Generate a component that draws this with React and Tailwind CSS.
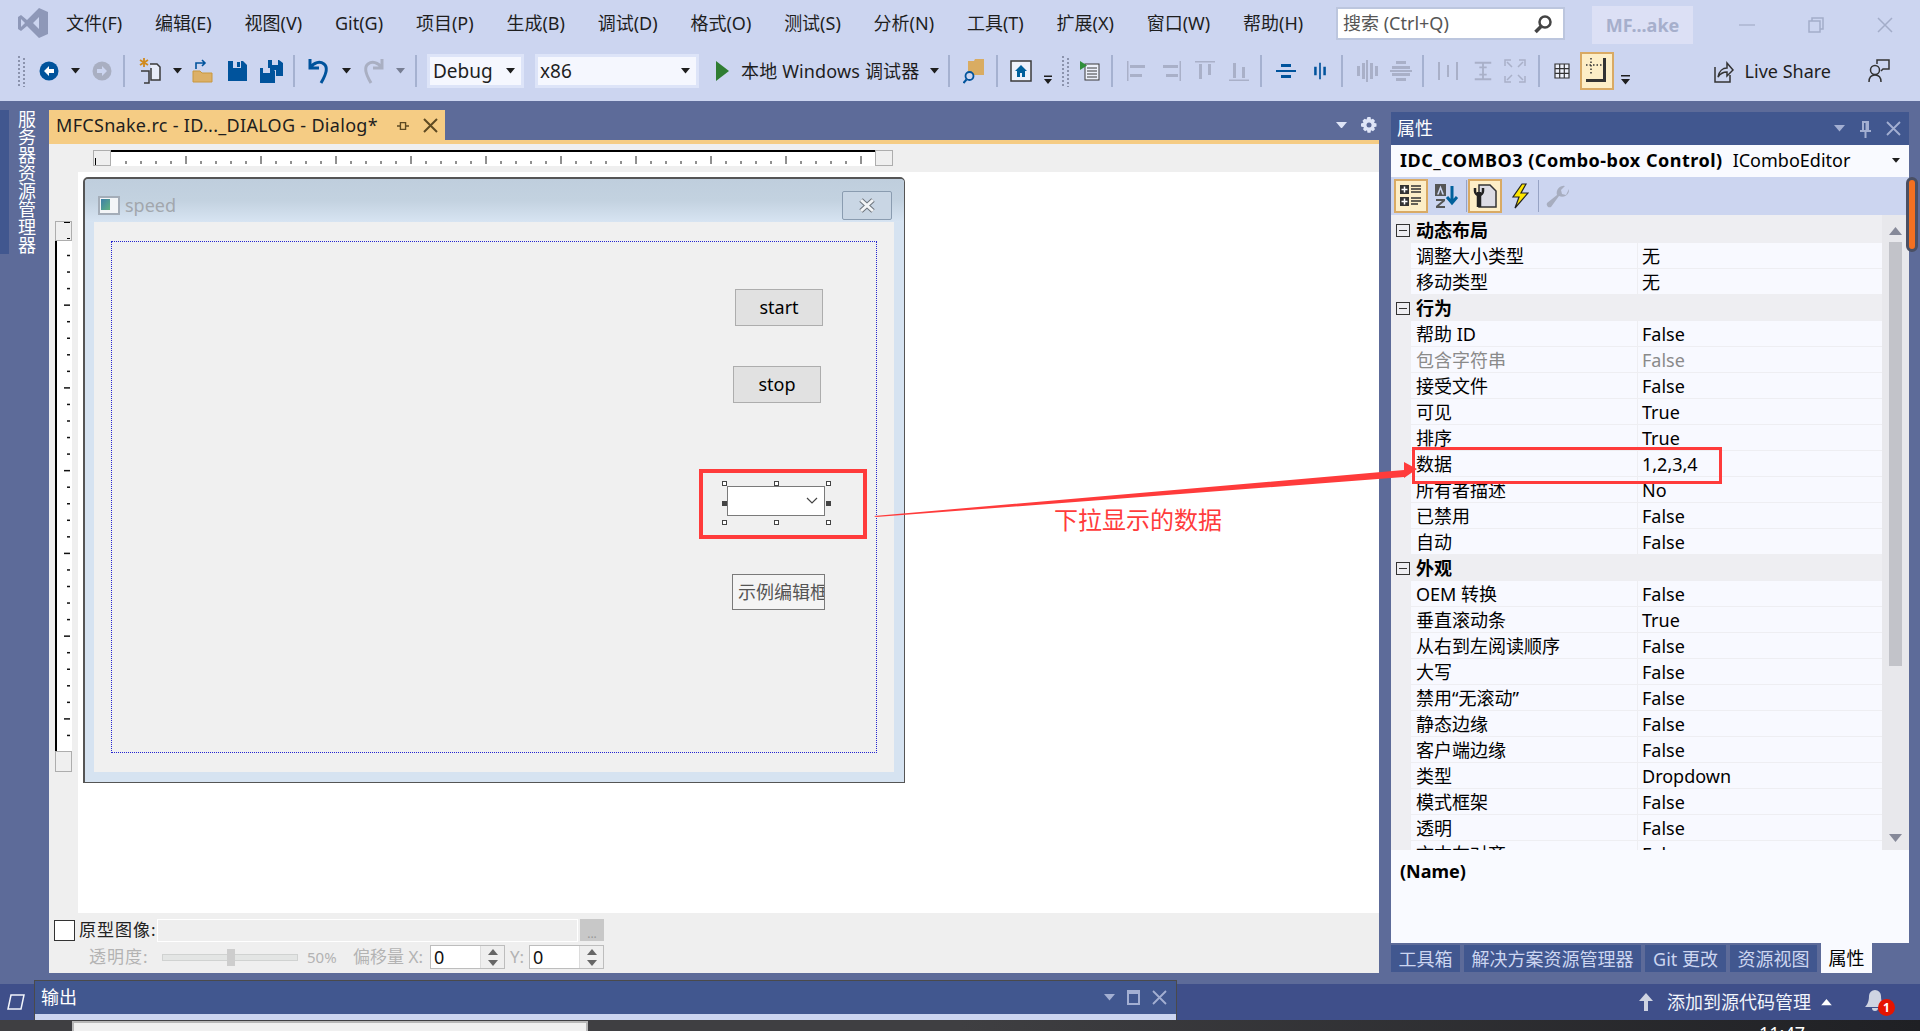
import React from "react";

const menus = ["文件(F)", "编辑(E)", "视图(V)", "Git(G)", "项目(P)", "生成(B)", "调试(D)", "格式(O)", "测试(S)", "分析(N)", "工具(T)", "扩展(X)", "窗口(W)", "帮助(H)"];

const rows = [
  { group: "动态布局" },
  { name: "调整大小类型", value: "无" },
  { name: "移动类型", value: "无" },
  { group: "行为" },
  { name: "帮助 ID", value: "False" },
  { name: "包含字符串", value: "False", muted: true },
  { name: "接受文件", value: "False" },
  { name: "可见", value: "True" },
  { name: "排序", value: "True" },
  { name: "数据", value: "1,2,3,4" },
  { name: "所有者描述", value: "No" },
  { name: "已禁用", value: "False" },
  { name: "自动", value: "False" },
  { group: "外观" },
  { name: "OEM 转换", value: "False" },
  { name: "垂直滚动条", value: "True" },
  { name: "从右到左阅读顺序", value: "False" },
  { name: "大写", value: "False" },
  { name: "禁用“无滚动”", value: "False" },
  { name: "静态边缘", value: "False" },
  { name: "客户端边缘", value: "False" },
  { name: "类型", value: "Dropdown" },
  { name: "模式框架", value: "False" },
  { name: "透明", value: "False" },
  { name: "文本左对齐", value: "False" },
];

const hTicks = Array.from({ length: 52 }, (_, i) => i);
const vTicks = Array.from({ length: 31 }, (_, i) => i);

function Caret({ color = "#1e1e1e", size = 9 }) {
  return (
    <svg width={size} height={size * 0.6} viewBox="0 0 10 6" className="shrink-0">
      <path d="M0 0h10L5 6z" fill={color} />
    </svg>
  );
}

function SmallDrop() {
  return (
    <svg width="9" height="10" viewBox="0 0 9 10" className="mt-[18px]">
      <path d="M0 0h9v1.5H0zM0 4h9L4.5 9.5z" fill="#1e1e1e" />
    </svg>
  );
}

function Sep() {
  return <div className="w-[2px] h-[32px] bg-[#a5b1d0]" />;
}

function Grip() {
  return (
    <svg width="8" height="32" viewBox="0 0 8 32">
      {[1, 5, 9, 13, 17, 21, 25, 29].map((y) => (
        <g key={y} fill="#8b93ad">
          <rect x="0" y={y} width="2" height="2" />
          <rect x="5" y={y + 2} width="2" height="2" />
        </g>
      ))}
    </svg>
  );
}

function Slot({ className, children }) {
  return <div className={`flex items-center justify-center h-full shrink-0 ${className}`}>{children}</div>;
}

function AlignIcon({ d, color = "#a9b0c8" }) {
  return (
    <svg width="24" height="24" viewBox="0 0 24 24">
      <path d={d} fill={color} />
    </svg>
  );
}

function Toolbar() {
  return (
    <div className="h-[55px] flex items-center pl-[14px] bg-[#ccd5f0] pb-[5px]">
      <Slot className="w-[16px]"><Grip /></Slot>
      <Slot className="w-[38px]">
        <svg width="20" height="20" viewBox="0 0 20 20">
          <circle cx="10" cy="10" r="9.5" fill="#00539c" />
          <path d="M10 5l-5 5 5 5v-3h5V8h-5z" fill="#fff" />
        </svg>
      </Slot>
      <Slot className="w-[14px]"><Caret /></Slot>
      <Slot className="w-[40px]">
        <svg width="20" height="20" viewBox="0 0 20 20">
          <circle cx="10" cy="10" r="9.5" fill="#a9afc2" />
          <path d="M10 5l5 5-5 5v-3H5V8h5z" fill="#ccd5f0" />
        </svg>
      </Slot>
      <Slot className="w-[4px]"><Sep /></Slot>
      <Slot className="w-[48px]">
        <svg width="24" height="26" viewBox="0 0 24 26">
          <path d="M6 0v9M2 2l8 5M10 2L2 7" stroke="#d08a1d" strokeWidth="1.800" />
          <path d="M12 6h7l3 3v13h-9V10" fill="#e8ecf8" stroke="#3a3a3a" strokeWidth="1.500" />
          <path d="M3 13h8v12H6" fill="none" stroke="#3a3a3a" strokeWidth="1.500" />
        </svg>
      </Slot>
      <Slot className="w-[6px]"><Caret /></Slot>
      <Slot className="w-[46px]">
        <svg width="22" height="24" viewBox="0 0 22 24">
          <path d="M1 12h7l2 2h10v9H1z" fill="#dcb067" stroke="#c9983f" />
          <path d="M4 10V4h9M10 1l3 3-3 3" fill="none" stroke="#00539c" strokeWidth="1.600" />
        </svg>
      </Slot>
      <Slot className="w-[24px]">
        <svg width="20" height="22" viewBox="0 0 20 22">
          <path d="M0 1h15l4 4v16H0z" fill="#00539c" />
          <path d="M5 1h8v7H5z" fill="#ccd5f0" />
          <path d="M9 2h3v5H9z" fill="#00539c" />
        </svg>
      </Slot>
      <Slot className="w-[42px]">
        <svg width="23" height="24" viewBox="0 0 23 24">
          <path d="M8 1h11l4 3v13h-7v-6H8z" fill="#00539c" />
          <path d="M12 1h6v5h-6z" fill="#ccd5f0" />
          <path d="M0 9h12l3 3v12H0z" fill="#00539c" />
          <path d="M3 9h7v5H3z" fill="#ccd5f0" />
        </svg>
      </Slot>
      <Slot className="w-[4px]"><Sep /></Slot>
      <Slot className="w-[48px]">
        <svg width="26" height="28" viewBox="0 0 26 28">
          <path d="M3 2v9h9M3 11c4-6 10-7 14-4 4 3 3 9-3 19" fill="none" stroke="#00539c" strokeWidth="3" />
        </svg>
      </Slot>
      <Slot className="w-[4px]"><Caret /></Slot>
      <Slot className="w-[48px]">
        <svg width="26" height="28" viewBox="0 0 26 28">
          <path d="M23 2v9h-9M23 11c-4-6-10-7-14-4-4 3-3 9 3 19" fill="none" stroke="#a9afc2" strokeWidth="3" />
        </svg>
      </Slot>
      <Slot className="w-[8px]"><Caret color="#777e93" /></Slot>
      <Slot className="w-[23px]"><Sep /></Slot>

      <div className="w-[97px] h-[34px] border-[3px] border-[#dde4f8] bg-[#f5f7fe] flex items-center justify-between pl-[3px] pr-[6px] text-[#1e1e1e] text-[19px] shrink-0">
        <span>Debug</span>
        <Caret />
      </div>
      <div className="ml-[11px] w-[164px] h-[34px] border-[3px] border-[#dde4f8] bg-[#f5f7fe] flex items-center justify-between pl-[2px] pr-[6px] text-[#1e1e1e] text-[19px] shrink-0">
        <span>x86</span>
        <Caret />
      </div>

      <svg width="13" height="20" viewBox="0 0 13 20" className="ml-[17px] shrink-0">
        <path d="M0 0l13 10L0 20z" fill="#2f7d32" />
      </svg>
      <span className="ml-[12px] w-[180px] text-[18px] tracking-[0.15px] text-[#1e1e1e] whitespace-nowrap shrink-0">本地 Windows 调试器</span>
      <Slot className="w-[26px]"><Caret /></Slot>
      <Slot className="w-[4px]"><Sep /></Slot>
      <Slot className="w-[45px]">
        <svg width="22" height="26" viewBox="0 0 22 26">
          <path d="M5 3h6l1-2h9v16H5z" fill="#d9ac62" />
          <circle cx="6.500" cy="18" r="4" fill="#ccd5f0" stroke="#00539c" strokeWidth="1.800" />
          <path d="M3.500 21.500L0.500 25" stroke="#00539c" strokeWidth="2" />
        </svg>
      </Slot>
      <Slot className="w-[2px]"><Sep /></Slot>
      <Slot className="w-[46px]">
        <svg width="22" height="22" viewBox="0 0 22 22">
          <rect x="1" y="1" width="20" height="20" fill="#edf1fb" stroke="#3a3a3a" strokeWidth="1.500" />
          <path d="M11 5l-6 6h2v6h3v-4h2v4h3v-6h2z" fill="#00609c" />
        </svg>
      </Slot>
      <Slot className="w-[8px]"><SmallDrop /></Slot>
      <Slot className="w-[28px]"><Grip /></Slot>
      <Slot className="w-[20px]">
        <svg width="20" height="22" viewBox="0 0 20 22">
          <rect x="5" y="4" width="14" height="16" fill="#edf1fb" stroke="#3a3a3a" />
          <path d="M7 8h10M7 11h10M7 14h10M7 17h10" stroke="#3a3a3a" />
          <path d="M0 1l7 4.500L0 10z" fill="#2f8f3a" />
        </svg>
      </Slot>
      <Slot className="w-[24px]"><Sep /></Slot>
      <Slot className="w-[26px]"><AlignIcon d="M2 2h1.500v20H2zM5 6h15v3H5zM5 15h12v3H5z" /></Slot>
      <Slot className="w-[42px]"><AlignIcon d="M20.500 2H22v20h-1.500zM4 6h15v3H4zM7 15h12v3H7z" /></Slot>
      <Slot className="w-[26px]"><AlignIcon d="M2 2h20v1.500H2zM6 5h3v15H6zM15 5h3v11h-3z" /></Slot>
      <Slot className="w-[42px]"><AlignIcon d="M2 20.500h20V22H2zM6 4h3v15H6zM15 8h3v11h-3z" /></Slot>
      <Slot className="w-[2px]"><Sep /></Slot>
      <Slot className="w-[48px]"><AlignIcon color="#00539c" d="M2 11h20v2H2zM7 5h10v3H7zM7 16h10v3H7z" /></Slot>
      <Slot className="w-[20px]"><AlignIcon color="#00539c" d="M11 2h2v20h-2zM5 7h3v10H5zM16 7h3v10h-3z" /></Slot>
      <Slot className="w-[24px]"><Sep /></Slot>
      <Slot className="w-[26px]"><AlignIcon d="M2 7h3v10H2zM7 4h3v16H7zM11 1h2v22h-2zM15 4h3v16h-3zM20 7h3v10h-3z" /></Slot>
      <Slot className="w-[42px]"><AlignIcon d="M7 2h10v3H7zM3 7h18v3H3zM1 11h22v2H1zM3 14h18v3H3zM7 19h10v3H7z" /></Slot>
      <Slot className="w-[2px]"><Sep /></Slot>
      <Slot className="w-[48px]"><AlignIcon d="M2 3h2v18H2zM20 3h2v18h-2zM11 6h2v12h-2zM8 9l8 6M16 9l-8 6" /></Slot>
      <Slot className="w-[22px]"><AlignIcon d="M3 2h18v2H3zM3 20h18v2H3zM11 4h2v16h-2zM8 7h8v2H8zM8 15h8v2H8z" /></Slot>
      <Slot className="w-[41px]">
        <svg width="22" height="24" viewBox="0 0 22 24" fill="none" stroke="#a9b0c8" strokeWidth="1.500">
          <path d="M1 7V1h6M21 7V1h-6M1 17v6h6M21 17v6h-6M3 3l5 5M19 3l-5 5M3 21l5-5M19 21l-5-5" />
        </svg>
      </Slot>
      <Slot className="w-[8px]"><Sep /></Slot>
      <Slot className="w-[37px]">
        <svg width="16" height="16" viewBox="0 0 16 16" fill="#eef1fb" stroke="#333" strokeWidth="1.200">
          <path d="M1 1h14v14H1zM5.700 1v14M10.300 1v14M1 5.700h14M1 10.300h14" />
        </svg>
      </Slot>
      <div className="w-[34px] h-[38px] bg-[#fdeec7] border-[2px] border-[#d9aa64] flex items-center justify-center shrink-0">
        <svg width="26" height="28" viewBox="0 0 26 28">
          <path d="M22 1v24H2v-3h17V1z" fill="#333" />
          <path d="M7 1v17M2 8h17" stroke="#333" strokeWidth="1.500" strokeDasharray="1.500 2" />
        </svg>
      </div>
      <Slot className="w-[22px]"><SmallDrop /></Slot>

      <div className="ml-auto flex items-center text-[18px] text-[#1e1e1e]">
        <svg width="20" height="24" viewBox="0 0 20 24" fill="none" stroke="#333" strokeWidth="1.500">
          <path d="M1 8v15h15v-7" />
          <path d="M4 18c1-6 5-9 9-9V4l6 7-6 6v-4c-4 0-7 2-9 5z" />
        </svg>
        <span className="ml-[11px]">Live Share</span>
        <svg width="22" height="26" viewBox="0 0 22 26" fill="none" stroke="#333" strokeWidth="1.500" className="ml-[37px] mr-[30px]">
          <circle cx="7" cy="12" r="4.500" />
          <path d="M1 24c0-5 2-7 6-7s6 2 6 7M9 6V2h12v9h-6l-2 2" />
        </svg>
      </div>
    </div>
  );
}

function MenuBar() {
  return (
    <div className="h-[46px] flex items-center bg-[#ccd5f0]">
      <svg width="32" height="32" viewBox="0 0 32 32" className="ml-[17px] shrink-0">
        <path d="M22 1l9 4v22l-9 4-12-12-6 5-3-2V10l3-2 6 5zM22 10l-6 6 6 6zM4 12v8l4-4z" fill="#8e98b8" />
      </svg>
      <nav className="ml-[17px] flex gap-[32.8px] text-[18px] text-[#1e1e1e] whitespace-nowrap">
        {menus.map((m) => <span key={m}>{m}</span>)}
      </nav>
      <div className="absolute left-[1336px] top-[7px] w-[229px] h-[33px] bg-white border-[2px] border-[#bcc6de] flex items-center justify-between pl-[5px] pr-[10px] text-[18px] text-[#555]">
        <span>搜索 (Ctrl+Q)</span>
        <svg width="20" height="20" viewBox="0 0 20 20" fill="none" stroke="#444" strokeWidth="2.500">
          <circle cx="12" cy="8" r="5.500" />
          <path d="M8 12.500L2.500 18" strokeWidth="3.500" />
        </svg>
      </div>
      <div className="absolute left-[1592px] top-[6px] w-[101px] h-[38px] bg-[#dce0f5] flex items-center justify-center text-[18px] font-bold text-[#a6afcc]">MF...ake</div>
      <svg width="16" height="16" viewBox="0 0 16 16" className="absolute left-[1739px] top-[17px]" stroke="#a3adc9" strokeWidth="1.200" fill="none">
        <path d="M0 8h16" />
      </svg>
      <svg width="16" height="16" viewBox="0 0 16 16" className="absolute left-[1808px] top-[17px]" stroke="#a3adc9" strokeWidth="1.500" fill="none">
        <path d="M1 4h11v11H1zM4 4V1h11v11h-3" />
      </svg>
      <svg width="16" height="16" viewBox="0 0 16 16" className="absolute left-[1877px] top-[17px]" stroke="#a3adc9" strokeWidth="1.500" fill="none">
        <path d="M1 1l14 14M15 1L1 15" />
      </svg>
    </div>
  );
}

function HRuler() {
  return (
    <div className="flex h-[15px] ml-[44px] shrink-0">
      <div className="w-[18px] h-[16px] bg-[#efefef] border border-[#adadad] flex items-end pl-[1px]">
        <div className="w-[1px] h-[7px] bg-black" />
      </div>
      <svg width="764" height="16" viewBox="0 0 764 16" className="bg-white shrink-0">
        <path d="M0 1h764" stroke="#000" strokeWidth="2" />
        {hTicks.map((i) => (
          <path key={i} d={`M${i * 15 + 15} ${(i + 1) % 5 === 0 ? 6 : 11}V14`} stroke="#222" />
        ))}
      </svg>
      <div className="w-[18px] h-[16px] bg-[#efefef] border border-[#adadad]" />
    </div>
  );
}

function VRuler() {
  return (
    <div className="flex flex-col w-[17px] ml-[6px] mt-[49px] shrink-0">
      <div className="w-[17px] h-[20px] bg-[#efefef] border border-[#adadad] shrink-0 flex flex-col items-end justify-between pr-[1px]">
        <div className="w-[6px] h-[1px] bg-black" />
        <div className="w-[3px] h-[1px] bg-black mb-[1px]" />
      </div>
      <svg width="17" height="510" viewBox="0 0 17 510" className="bg-white shrink-0">
        <path d="M1 0v510" stroke="#000" strokeWidth="2" />
        {vTicks.map((i) => (
          <path key={i} d={`M${i % 5 === 3 ? 9 : 12} ${i * 16.55 + 14.5}H15`} stroke="#111" strokeWidth="1.500" />
        ))}
      </svg>
      <div className="w-[17px] h-[21px] bg-[#efefef] border border-[#adadad] shrink-0" />
    </div>
  );
}

function Handle({ className, solid }) {
  return <div className={`absolute w-[5px] h-[5px] border border-[#444] ${solid ? "bg-[#444]" : "bg-white"} ${className}`} />;
}

function DialogBox() {
  return (
    <div className="ml-[5px] mt-[5px] w-[822px] h-[606px] flex flex-col bg-[#d6e3f1] border border-[#555] border-t-[2px] border-l-[2px] rounded-t-[5px] shrink-0">
      <div className="h-[43px] shrink-0 flex items-center pt-[9px] relative bg-gradient-to-b from-[#bfcedd] via-[#c3d2e0] to-[#d7e4f2] rounded-t-[4px]">
        <div className="ml-[13px] w-[22px] h-[19px] bg-[#f3f5f7] border-[2px] border-[#a4adb8] flex">
          <div className="w-[9px] h-[11px] ml-[1px] mt-[1px] bg-gradient-to-br from-[#3f7ea7] to-[#61b27d]" />
        </div>
        <span className="ml-[5px] text-[18px] text-[#a2a7ad] leading-none">speed</span>
        <div className="absolute left-[757px] top-[12px] w-[50px] h-[29px] border border-[#8a9cb0] rounded-[2px] flex items-center justify-center bg-[#c9d6e4]">
          <svg width="18" height="17" viewBox="0 0 18 17">
            <path d="M3 3l12 11M15 3L3 14" stroke="#6d747c" strokeWidth="5" />
            <path d="M3 3l12 11M15 3L3 14" stroke="#f2f4f6" strokeWidth="3" />
          </svg>
        </div>
      </div>
      <div className="relative mx-[9px] w-[800px] h-[550px] bg-[#f0f0f0]">
        <div className="absolute left-[17px] top-[19px] w-[766px] h-[512px] border border-dotted border-[#2424d0]" />
        <div className="absolute left-[641px] top-[67px] w-[88px] h-[37px] bg-[#e1e1e1] border border-[#adadad] flex items-center justify-center text-[18px] text-black">start</div>
        <div className="absolute left-[639px] top-[144px] w-[88px] h-[37px] bg-[#e1e1e1] border border-[#adadad] flex items-center justify-center text-[18px] text-black">stop</div>

        <div className="absolute left-[633px] top-[264px] w-[98px] h-[30px] bg-white border border-[#7a7a7a] flex items-center justify-end pr-[6px]">
          <svg width="12" height="8" viewBox="0 0 12 8" fill="none" stroke="#444" strokeWidth="1.200">
            <path d="M1 1l5 5 5-5" />
          </svg>
        </div>
        <Handle className="left-[628px] top-[259px]" />
        <Handle className="left-[680px] top-[259px]" />
        <Handle className="left-[732px] top-[259px]" />
        <Handle className="left-[628px] top-[279px]" solid />
        <Handle className="left-[732px] top-[279px]" solid />
        <Handle className="left-[628px] top-[298px]" />
        <Handle className="left-[680px] top-[298px]" />
        <Handle className="left-[732px] top-[298px]" />

        <div className="absolute left-[638px] top-[352px] w-[93px] h-[36px] bg-[#f4f4f4] border border-[#7a7a7a] flex items-center pl-[5px] overflow-hidden text-[18px] text-[#555] whitespace-nowrap">示例编辑框</div>
      </div>
    </div>
  );
}

function Spin() {
  return (
    <div className="w-[24px] h-full flex flex-col bg-[#efefef] border-l border-[#dcdcdc] items-center justify-around">
      <span className="rotate-180 flex"><Caret color="#666" size={10} /></span>
      <span className="flex"><Caret color="#666" size={10} /></span>
    </div>
  );
}

function BottomPanel() {
  return (
    <div className="h-[60px] shrink-0 bg-[#efefef] pl-[5px] pt-[5px] flex flex-col gap-[3px] text-[17px]">
      <div className="flex items-center h-[24px]">
        <div className="w-[21px] h-[21px] bg-white border border-[#333]" />
        <span className="ml-[4px] w-[78px] tracking-[1px] text-[#222] whitespace-nowrap">原型图像:</span>
        <div className="w-[421px] h-[23px] bg-[#eeeeee] border border-white" />
        <div className="ml-[2px] w-[24px] h-[22px] bg-[#c8c8c8] text-[#999] text-[12px] flex items-end justify-center leading-[14px]">...</div>
      </div>
      <div className="flex items-center h-[24px] text-[#b3b3b3] whitespace-nowrap">
        <span className="ml-[35px] w-[73px] tracking-[1px]">透明度:</span>
        <div className="relative w-[136px] h-[7px] bg-[#e3e5e4] border border-[#d0d2d1]">
          <div className="absolute left-[64px] -top-[6px] w-[8px] h-[17px] bg-[#cdcdcd]" />
        </div>
        <span className="ml-[9px] w-[46px] text-[15px]">50%</span>
        <span className="w-[77px]">偏移量 X:</span>
        <div className="w-[75px] h-[24px] bg-white border border-[#bdbdbd] flex items-center justify-between text-[18px] text-[#111] pl-[3px]">
          0
          <Spin />
        </div>
        <span className="ml-[5px] w-[19px]">Y:</span>
        <div className="w-[75px] h-[24px] bg-white border border-[#bdbdbd] flex items-center justify-between text-[18px] text-[#111] pl-[3px]">
          0
          <Spin />
        </div>
      </div>
    </div>
  );
}

function PropsPanel() {
  return (
    <div className="w-[518px] mt-[11px] h-[861px] flex flex-col shrink-0 text-[18px] relative">
      <div className="h-[33px] bg-[#41578f] flex items-center pl-[6px] pr-[8px] text-white shrink-0">
        <span>属性</span>
        <div className="ml-auto flex items-center gap-[15px]">
          <Caret color="#a3afd2" size={11} />
          <svg width="11" height="18" viewBox="0 0 11 18" fill="#a3afd2">
            <path d="M2 1h7v9h2v2H6.500v6h-2v-6H0v-2h2zM4 3v7h1.500V3z" />
          </svg>
          <svg width="15" height="15" viewBox="0 0 15 15" stroke="#a3afd2" strokeWidth="1.800" fill="none">
            <path d="M1 1l13 13M14 1L1 14" />
          </svg>
        </div>
      </div>
      <div className="h-[32px] bg-[#f9faff] flex items-center pl-[9px] pr-[9px] pb-[1px] shrink-0 text-black whitespace-nowrap">
        <span className="font-bold tracking-[0.5px]">IDC_COMBO3 (Combo-box Control)</span>
        <span className="ml-[10px]">IComboEditor</span>
        <span className="ml-auto"><Caret size={8} /></span>
      </div>
      <div className="h-[38px] bg-[#ccd5f0] flex items-center pl-[3px] shrink-0">
        <div className="w-[34px] h-[34px] bg-[#fdeec7] border-[2px] border-[#d9aa64] flex items-center justify-center">
          <svg width="22" height="24" viewBox="0 0 22 24">
            <path d="M0 1h9v9H0zM0 13h9v9H0z" fill="#333" />
            <path d="M1.500 5.500h6M4.500 2.500v6M1.500 17.500h6M4.500 14.500v6" stroke="#fff" strokeWidth="1.500" />
            <path d="M11 2h10M11 5h10M11 8h10M11 14h10M11 17h10M11 20h7" stroke="#333" strokeWidth="1.500" />
          </svg>
        </div>
        <div className="w-[38px] flex justify-center">
          <svg width="24" height="26" viewBox="0 0 24 26">
            <rect x="0" y="1" width="11" height="12" fill="#555" />
            <path d="M5.500 2.500L2 11.500h1.800l1.700-5 1.700 5H9z" fill="#ccd5f0" />
            <path d="M1 16h9v2l-6 5h6v2H1v-2l6-5H1z" fill="#555" />
            <path d="M17 3v16M12 14l5 6 5-6" stroke="#00609c" strokeWidth="3" fill="none" />
          </svg>
        </div>
        <div className="w-[1px] h-[32px] bg-[#97a3c4]" />
        <div className="ml-[1px] w-[34px] h-[34px] bg-[#fdeec7] border-[2px] border-[#d9aa64] flex items-center justify-center">
          <svg width="26" height="26" viewBox="0 0 26 26">
            <path d="M7 2h11l6 6v16H7z" fill="#dcdce4" stroke="#333" strokeWidth="1.500" />
            <path d="M7 9v15" stroke="#222" strokeWidth="4.500" />
            <path d="M3 5v3a4 4 0 0 0 8 0V5" stroke="#222" strokeWidth="2.500" fill="none" />
          </svg>
        </div>
        <div className="w-[36px] flex justify-center">
          <svg width="18" height="26" viewBox="0 0 18 26">
            <path d="M11 1L2 14h6L4 25l13-15h-7l5-9z" fill="#ffe600" stroke="#222" strokeWidth="1.200" />
          </svg>
        </div>
        <div className="w-[1px] h-[32px] bg-[#97a3c4]" />
        <div className="w-[38px] flex justify-center">
          <svg width="24" height="26" viewBox="0 0 24 26">
            <path d="M23 6a7 7 0 0 1-10 7L5 24a3 3 0 0 1-4-4l10-8a7 7 0 0 1 8-9l-4 4 1 4 4 1z" fill="#a7adbf" />
          </svg>
        </div>
      </div>

      <div className="h-[635px] flex shrink-0 overflow-hidden bg-[#eeeef2]">
        <div className="w-[491px] pt-[2px] shrink-0">
          {rows.map((r, i) =>
            r.group ? (
              <div key={i} className="h-[26px] flex items-center pl-[5px] bg-[#eeeef2] text-black font-bold">
                <div className="w-[14px] h-[13px] border border-[#333] flex items-center justify-center bg-[#eeeef2]">
                  <div className="w-[8px] h-[1px] bg-[#333]" />
                </div>
                <span className="ml-[6px]">{r.group}</span>
              </div>
            ) : (
              <div key={i} className={`h-[26px] ml-[20px] flex border-b-[1.500px] border-[#eeeef2] bg-[#f8f9ff] ${r.muted ? "text-[#8a8a8a]" : "text-black"}`}>
                <div className="w-[227px] pl-[5px] pt-[1px] border-r-[1.500px] border-[#eeeef2] flex items-center whitespace-nowrap">{r.name}</div>
                <div className="pl-[4px] pt-[1px] flex items-center">{r.value}</div>
              </div>
            )
          )}
        </div>
        <div className="w-[27px] flex flex-col items-center bg-[#e8e8ec]">
          <div className="h-[27px] flex items-center pt-[4px]"><svg width="13" height="8" viewBox="0 0 13 8"><path d="M0 8h13L6.500 0z" fill="#868999" /></svg></div>
          <div className="w-[13px] h-[424px] bg-[#c2c3c9]" />
          <div className="mt-auto h-[16px]"><svg width="13" height="8" viewBox="0 0 13 8"><path d="M0 0h13L6.500 8z" fill="#868999" /></svg></div>
        </div>
      </div>

      <div className="h-[93px] bg-[#f9faff] pl-[9px] pt-[8px] font-bold text-black shrink-0">(Name)</div>

      <div className="flex items-start gap-[4px] h-[30px] text-[#ccd5f0]">
        <div className="w-[69px] h-[27px] mt-[2px] pt-[1px] bg-[#41578f] flex items-center justify-center">工具箱</div>
        <div className="w-[177px] h-[27px] mt-[2px] pt-[1px] bg-[#41578f] flex items-center justify-center">解决方案资源管理器</div>
        <div className="w-[81px] h-[27px] mt-[2px] pt-[1px] bg-[#41578f] flex items-center justify-center">Git 更改</div>
        <div className="w-[87px] h-[27px] mt-[2px] pt-[1px] bg-[#41578f] flex items-center justify-center">资源视图</div>
        <div className="w-[51px] h-[30px] bg-[#f9faff] text-black flex items-center justify-center">属性</div>
      </div>

      <div className="absolute right-[-9px] top-[65px] w-[12px] h-[75px] rounded-[6px] border-[3px] border-[#4a4f63] bg-[#f37021]" />
    </div>
  );
}

function Annotations() {
  return (
    <>
      <svg width="1920" height="1031" viewBox="0 0 1920 1031" className="absolute left-0 top-0 pointer-events-none">
        <path d="M874 516L1404 470V462L1417 469L1404 478V477L876 517z" fill="#ff3b3b" />
      </svg>
      <div className="absolute left-[699px] top-[469px] w-[168px] h-[70px] border-[4px] border-[#ff3b3b]" />
      <div className="absolute left-[1412px] top-[447px] w-[310px] h-[37px] border-[3px] border-[#ff3b3b]" />
      <span className="absolute left-[1054px] top-[503px] text-[24px] leading-[34px] text-[#ff3b3b]">下拉显示的数据</span>
    </>
  );
}

export default function App() {
  return (
    <div className="relative w-[1920px] h-[1031px] overflow-hidden bg-[#5d6b99] flex flex-col font-['Noto_Sans','Noto_Sans_CJK_SC',sans-serif] text-[18px]">
      <MenuBar />
      <Toolbar />

      <div className="h-[883px] flex shrink-0">
        <div className="w-[49px] shrink-0 flex items-start">
          <div className="w-[9px] h-[144px] mt-[9px] bg-[#41578f]" />
          <span className="mt-[9px] ml-[8px] [writing-mode:vertical-rl] leading-[18px] text-white text-[18px] whitespace-nowrap">服务器资源管理器</span>
        </div>

        <div className="w-[1330px] shrink-0 flex flex-col pt-[9px]">
          <div className="h-[30px] flex shrink-0">
            <div className="w-[396px] bg-[#f5cc84] flex items-center pl-[7px] pr-[7px] pt-[1px] text-[#1e1e1e] whitespace-nowrap">
              <span className="tracking-[0.3px]">MFCSnake.rc - ID..._DIALOG - Dialog*</span>
              <svg width="12" height="12" viewBox="0 0 14 14" fill="none" stroke="#5e4a22" strokeWidth="1.600" className="ml-auto">
                <path d="M0 7h4M4 3h6v8H4zM4 3v8M10 7h4" />
              </svg>
              <svg width="15" height="15" viewBox="0 0 15 15" fill="none" stroke="#5e4a22" strokeWidth="2" className="ml-[14px]">
                <path d="M1 1l13 13M14 1L1 14" />
              </svg>
            </div>
            <div className="ml-auto flex items-center gap-[14px] pr-[2px]">
              <Caret color="#dfe5f7" size={11} />
              <svg width="16" height="16" viewBox="0 0 16 16">
                <path d="M6.500 0h3l.5 2.500 2-.8 2 2-1 2 2.500.8v3l-2.500.8 1 2-2 2-2-1-.5 2.500h-3l-.5-2.500-2 1-2-2 1-2L0 9.500v-3l2.500-.8-1-2 2-2 2 .8z" fill="#dfe5f7" />
                <circle cx="8" cy="8" r="2.500" fill="#5d6b99" />
              </svg>
            </div>
          </div>
          <div className="h-[4px] bg-[#f5cc84] shrink-0" />
          <div className="h-[28px] bg-[#efefef] pt-[6px] shrink-0"><HRuler /></div>
          <div className="h-[741px] flex shrink-0">
            <div className="w-[29px] bg-[#efefef] flex shrink-0"><VRuler /></div>
            <div className="flex-1 bg-white flex items-start"><DialogBox /></div>
          </div>
          <BottomPanel />
        </div>

        <div className="ml-[12px]"><PropsPanel /></div>
      </div>

      <div className="h-[36px] bg-[#3f4f8a] flex items-center shrink-0 text-[#f2f4fb]">
        <svg width="18" height="16" viewBox="0 0 18 16" fill="none" stroke="#f2f4fb" strokeWidth="1.500" className="ml-[7px]">
          <path d="M4 1h13l-3 14H1z" />
        </svg>
        <div className="ml-auto flex items-center">
          <svg width="14" height="18" viewBox="0 0 14 18" fill="#cfd4e2">
            <path d="M7 0l7 8H9v10H5V8H0z" />
          </svg>
          <span className="ml-[14px]">添加到源代码管理</span>
          <span className="ml-[10px] rotate-180 flex"><Caret color="#fff" size={11} /></span>
          <div className="relative ml-[33px] mr-[35px] w-[20px] h-[24px]">
            <svg width="20" height="22" viewBox="0 0 20 22" fill="#cfd4e2">
              <path d="M10 0a6 6 0 0 1 6 6c0 6 2 9 4 11H0c2-2 4-5 4-11a6 6 0 0 1 6-6zM7 18h6a3 3 0 0 1-6 0z" />
            </svg>
            <div className="absolute left-[13px] top-[9px] w-[17px] h-[17px] rounded-full bg-[#e51400] text-white text-[12px] font-bold flex items-center justify-center leading-none">1</div>
          </div>
        </div>
      </div>

      <div className="h-[11px] bg-gradient-to-r from-[#3f3f42] via-[#3f3f42] to-[#1f2024] relative shrink-0 overflow-hidden">
        <div className="absolute left-[72px] top-[1px] w-[516px] h-[12px] bg-[#f0f0f0] border-[2px] border-[#b8b8b8]" />
        <span className="absolute left-[1759px] top-[4px] text-[18px] text-white leading-[18px]">11:47</span>
      </div>

      <div className="absolute left-[34px] top-[980px] w-[1143px] h-[40px] border-l border-t border-r border-[#4a4a4a] flex flex-col">
        <div className="h-[33px] bg-[#41578f] flex items-center pl-[6px] pr-[9px] text-white">
          <span>输出</span>
          <div className="ml-auto flex items-center gap-[12px]">
            <Caret color="#a3afd2" size={11} />
            <div className="w-[13px] h-[15px] border-[2px] border-t-[4px] border-[#a3afd2]" />
            <svg width="15" height="15" viewBox="0 0 15 15" stroke="#a3afd2" strokeWidth="1.800" fill="none">
              <path d="M1 1l13 13M14 1L1 14" />
            </svg>
          </div>
        </div>
        <div className="flex-1 bg-[#ccd5f0]" />
      </div>

      <Annotations />
    </div>
  );
}
